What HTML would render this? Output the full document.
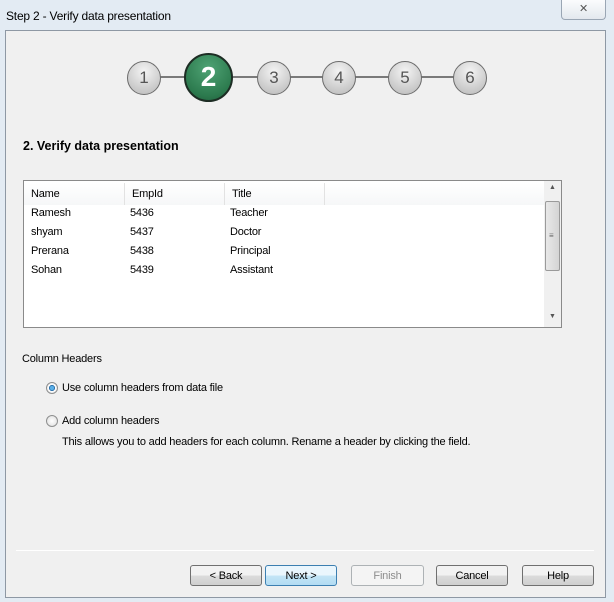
<!DOCTYPE html>
<html><head><style>
*{margin:0;padding:0;box-sizing:border-box}
body{width:614px;height:602px;background:#e3ebf3;font-family:"Liberation Sans",sans-serif;font-size:11px;color:#000;position:relative;overflow:hidden;letter-spacing:-0.2px}
.a{position:absolute}
.title{left:6px;top:9px;font-size:12px}
.close{left:561px;top:0;width:45px;height:20px;border:1px solid #9aa6b4;border-top:none;border-radius:0 0 4px 4px;background:linear-gradient(#fbfcfd,#e3e8ee);text-align:center;font-size:11px;color:#555;line-height:18px}
.panel{left:5px;top:30px;width:601px;height:568px;background:#f0f0f0;border:1px solid #8e98a4}
.line{left:144px;top:76px;width:326px;height:2px;background:#7a7a7a}
.c{border-radius:50%;border:1px solid #6c6c6c;background:radial-gradient(circle at 50% 30%,#f4f4f4,#c9c9c9 70%,#b8b8b8);text-align:center;color:#555;font-size:17px;letter-spacing:0}
.big{background:radial-gradient(circle at 50% 30%,#4fa374,#2c7a4e 70%,#1f5d3a);border:2px solid #1d2d24;color:#fff;font-size:28px;font-weight:bold}
.h{left:23px;top:139px;font-size:12.5px;font-weight:bold;letter-spacing:0}
.list{left:23px;top:180px;width:539px;height:148px;background:#fff;border:1px solid #8a8a8a}
.hd{position:absolute;top:2px;height:22px;line-height:22px;padding-left:7px;border-right:1px solid #e2e2e2;background:linear-gradient(#fff,#f6f7f8)}
.row{position:absolute;left:7px}
.sb{position:absolute;left:520px;top:0;width:17px;height:146px;background:#f0f0f0}
.thumb{position:absolute;left:1px;top:20px;width:15px;height:70px;border:1px solid #9a9a9a;border-radius:2px;background:linear-gradient(90deg,#e8e8e8,#d4d4d4)}
.radio{width:12px;height:12px;border-radius:50%;border:1px solid #8e8f8f;background:radial-gradient(#fff,#dcdcdc)}
.btn{top:565px;height:21px;border:1px solid #707070;border-radius:3px;background:linear-gradient(#f2f2f2 50%,#dcdcdc 50%,#cfcfcf);text-align:center;line-height:21px;font-size:11px}
</style></head><body>
<div class="a title">Step 2 - Verify data presentation</div>
<div class="a close">✕</div>
<div class="a panel"></div>
<div class="a line"></div>
<div class="a c" style="left:127px;top:61px;width:34px;height:34px;line-height:32px">1</div>
<div class="a c big" style="left:184px;top:53px;width:49px;height:49px;line-height:44px">2</div>
<div class="a c" style="left:257px;top:61px;width:34px;height:34px;line-height:32px">3</div>
<div class="a c" style="left:322px;top:61px;width:34px;height:34px;line-height:32px">4</div>
<div class="a c" style="left:388px;top:61px;width:34px;height:34px;line-height:32px">5</div>
<div class="a c" style="left:453px;top:61px;width:34px;height:34px;line-height:32px">6</div>
<div class="a h">2. Verify data presentation</div>
<div class="a list">
<div class="hd" style="left:0;width:101px">Name</div>
<div class="hd" style="left:101px;width:100px">EmpId</div>
<div class="hd" style="left:201px;width:100px">Title</div>
<div class="hd" style="left:301px;width:219px;border-right:none"></div>
<div class="row" style="top:26px">Ramesh</div><div class="row" style="top:26px;left:106px">5436</div><div class="row" style="top:26px;left:206px">Teacher</div>
<div class="row" style="top:45px">shyam</div><div class="row" style="top:45px;left:106px">5437</div><div class="row" style="top:45px;left:206px">Doctor</div>
<div class="row" style="top:64px">Prerana</div><div class="row" style="top:64px;left:106px">5438</div><div class="row" style="top:64px;left:206px">Principal</div>
<div class="row" style="top:83px">Sohan</div><div class="row" style="top:83px;left:106px">5439</div><div class="row" style="top:83px;left:206px">Assistant</div>
<div class="sb"><div style="position:absolute;top:3px;left:5px;font-size:7px;color:#555">▲</div><div class="thumb"></div><div style="position:absolute;top:50px;left:5px;font-size:8px;color:#666">≡</div><div style="position:absolute;top:132px;left:5px;font-size:7px;color:#555">▼</div></div>
</div>
<div class="a" style="left:22px;top:353px">Column Headers</div>
<div class="a radio" style="left:46px;top:382px;background:radial-gradient(#5ab0e8 25%,#1d5e9a 40%,#fff 45%,#ddd)"></div>
<div class="a" style="left:62px;top:382px">Use column headers from data file</div>
<div class="a radio" style="left:46px;top:415px"></div>
<div class="a" style="left:62px;top:415px">Add column headers</div>
<div class="a" style="left:62px;top:436px">This allows you to add headers for each column. Rename a header by clicking the field.</div>
<div class="a" style="left:16px;top:550px;width:578px;height:1px;background:#a0a0a0;border-bottom:1px solid #fff"></div>
<div class="a btn" style="left:190px;width:72px">&lt; Back</div>
<div class="a btn" style="left:265px;width:72px;border-color:#3c7fb1;background:linear-gradient(#eaf6fd 50%,#c4e5f6 50%,#b2dcf3)">Next &gt;</div>
<div class="a btn" style="left:351px;width:73px;border-color:#adb2b5;background:#f4f4f4;color:#8d8d8d">Finish</div>
<div class="a btn" style="left:436px;width:72px">Cancel</div>
<div class="a btn" style="left:522px;width:72px">Help</div>
</body></html>
